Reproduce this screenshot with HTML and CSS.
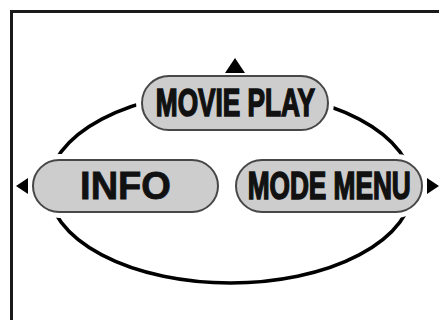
FILE: index.html
```html
<!DOCTYPE html>
<html lang="en">
<head>
  <meta charset="UTF-8">
  <title>Mode dial</title>
  <meta name="viewport" content="width=device-width, initial-scale=1.0" />
  <link rel="stylesheet" href="styles.css">
</head>
<body>
  <div class="screen">
    <svg class="ring" width="426" height="307" viewBox="0 0 426 307">
      <ellipse cx="217.5" cy="174" rx="182" ry="96" fill="none" stroke="#000" stroke-width="3.5" />
    </svg>
    <div class="top">
      <span class="arrow arrow-up"></span>
      <div class="pill pill-tall"><span class="label narrow">MOVIE PLAY</span></div>
    </div>
    <div class="middle">
      <span class="arrow arrow-left"></span>
      <div class="pill"><span class="label">INFO</span></div>
      <div class="pill pill-right"><span class="label narrow">MODE MENU</span></div>
      <span class="arrow arrow-right"></span>
    </div>
  </div>
</body>
</html>
```

FILE: styles.css
```css
body {
    margin: 0;
    background: #fff;
    overflow: hidden;
}

.screen {
    position: relative;
    box-sizing: border-box;
    height: 310px;
    margin: 10px 0 0 10px;
    border-top: 3px solid #1a1a1a;
    border-left: 3px solid #1a1a1a;
}

.ring {
    position: absolute;
    left: 0;
    top: 0;
    z-index: 0;
}

.top {
    display: flex;
    flex-direction: column;
    align-items: center;
    gap: 2px;
    width: 188px;
    margin: 45px 0 0 128px;
}

.middle {
    display: flex;
    align-items: center;
    gap: 4px;
    margin: 28px 0 0 3px;
}

.pill {
    position: relative;
    z-index: 1;
    box-sizing: border-box;
    display: flex;
    align-items: center;
    justify-content: center;
    width: 188px;
    height: 54px;
    background: #cdcdcd;
    border: 2px solid #474747;
    border-radius: 27px;
    box-shadow: 0 0 0 5px #fff;
}

.pill-tall {
    height: 56px;
    border-radius: 28px;
}

.pill-right {
    margin-left: 12px;
}

.label {
    font: bold 38px/1 "Liberation Sans", Arial, sans-serif;
    color: #111;
    white-space: nowrap;
    -webkit-text-stroke: 0.8px #111;
}

.narrow {
    display: inline-block;
    transform: scaleX(0.69);
    -webkit-text-stroke: 1.6px #111;
}

.arrow {
    position: relative;
    z-index: 2;
    width: 0;
    height: 0;
}

.arrow-up {
    border-left: 10px solid transparent;
    border-right: 10px solid transparent;
    border-bottom: 15px solid #000;
}

.arrow-left {
    border-top: 8px solid transparent;
    border-bottom: 8px solid transparent;
    border-right: 12px solid #000;
}

.arrow-right {
    border-top: 8px solid transparent;
    border-bottom: 8px solid transparent;
    border-left: 12px solid #000;
}
```
